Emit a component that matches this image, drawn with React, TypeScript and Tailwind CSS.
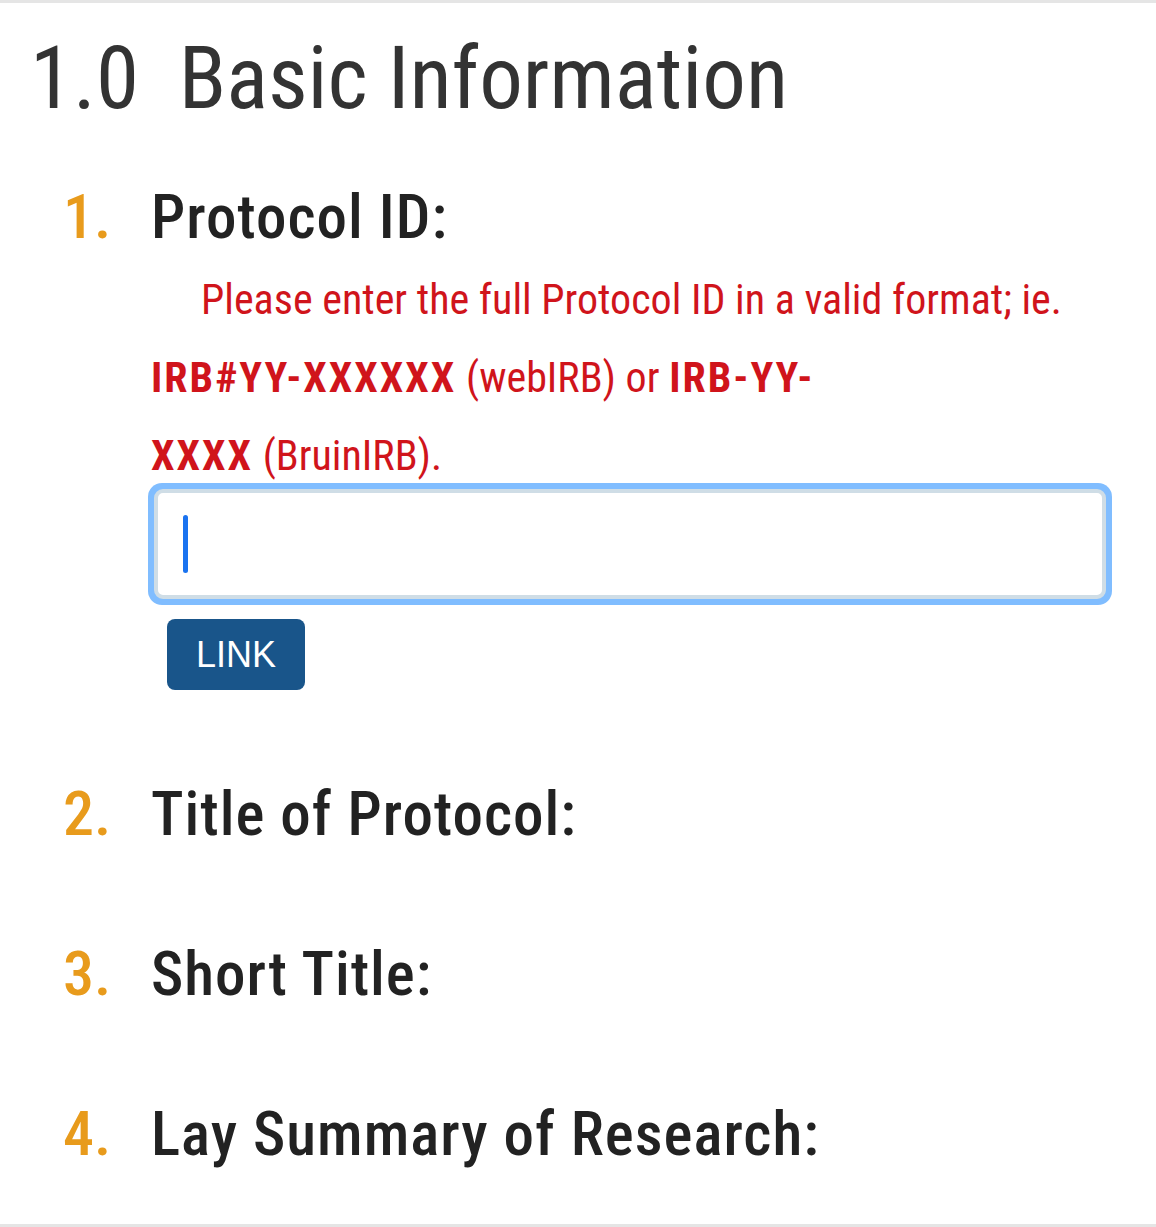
import React from 'react';

const cond = "[font-family:'Roboto_Condensed',Roboto,sans-serif] [font-stretch:condensed]";

const Question = ({ num, label, children }: { num: string; label: string; children?: React.ReactNode }) => (
  <li className="flex">
    <span className={`w-[88px] shrink-0 text-[62px] leading-[72px] font-medium text-[#e89b1c] ${cond}`}>{num}.</span>
    <div className="flex-1">
      <h3 className={`text-[61px] leading-[72px] font-medium tracking-[1px] text-[#222] ${cond}`}>{label}</h3>
      {children}
    </div>
  </li>
);

export default function App() {
  return (
    <div className="min-h-[1227px] bg-white border-t-[3px] border-b-[3px] border-[#e5e5e5]">
      <div className="pl-[30px] pr-[44px] pt-[20px] pb-[50px]">
        <h2 className={`text-[87px] leading-[110px] text-[#333] ${cond}`}>1.0&nbsp; Basic Information</h2>
        <ol className="mt-[48px] pl-[33px] flex flex-col gap-[88px]">
          <Question num="1" label="Protocol ID:">
            <p className={`mt-[8px] text-[42px] leading-[78px] text-[#d0141b] indent-[50px] ${cond}`}>
              Please enter the full Protocol ID in a valid format; ie.{' '}
              <b className="font-bold tracking-[2px]">IRB#YY-XXXXXX</b> (webIRB) or{' '}
              <b className="font-bold tracking-[2px]">IRB-YY-</b>
              <br />
              <b className="font-bold tracking-[2px]">XXXX</b> (BruinIRB).
            </p>
            <div className="-mt-[12px] h-[122px] w-[964px] -ml-[3px] rounded-[14px] bg-[#80bdff] p-[6px]">
              <div className="h-full rounded-[9px] border-[4px] border-[#cfdde6] bg-white flex items-center pl-[25px]">
                <div className="h-[58px] w-[5px] rounded-full bg-[#1a73f0]" />
              </div>
            </div>
            <button className="mt-[14px] ml-[16px] h-[71px] w-[138px] rounded-[8px] bg-[#19558a] text-white text-[36px] [font-family:'Liberation_Sans_Narrow','Liberation_Sans',sans-serif]">
              LINK
            </button>
          </Question>
          <Question num="2" label="Title of Protocol:" />
          <Question num="3" label="Short Title:" />
          <Question num="4" label="Lay Summary of Research:" />
        </ol>
      </div>
    </div>
  );
}
